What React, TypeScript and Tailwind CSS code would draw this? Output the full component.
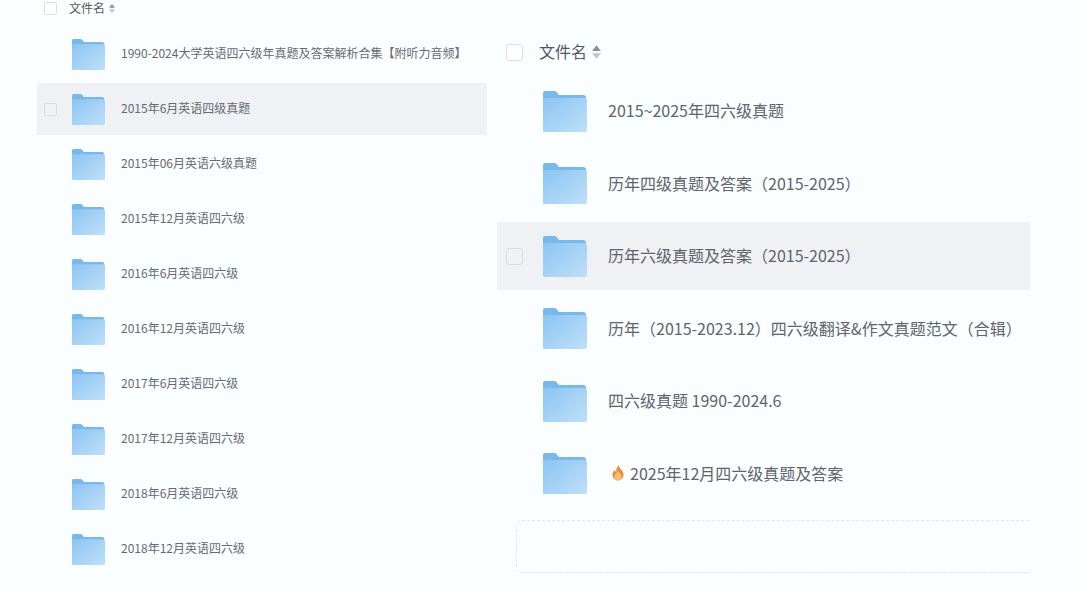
const leftRows = [
  "1990-2024大学英语四六级年真题及答案解析合集【附听力音频】",
  "2015年6月英语四级真题",
  "2015年06月英语六级真题",
  "2015年12月英语四六级",
  "2016年6月英语四六级",
  "2016年12月英语四六级",
  "2017年6月英语四六级",
  "2017年12月英语四六级",
  "2018年6月英语四六级",
  "2018年12月英语四六级",
];

const rightRows = [
  "2015~2025年四六级真题",
  "历年四级真题及答案（2015-2025）",
  "历年六级真题及答案（2015-2025）",
  "历年（2015-2023.12）四六级翻译&作文真题范文（合辑）",
  "四六级真题 1990-2024.6",
  "2025年12月四六级真题及答案",
];

function FolderIcon({ className, id }: { className: string; id: string }) {
  return (
    <svg className={className} viewBox="0 0 44 41" preserveAspectRatio="none">
      <defs>
        <linearGradient id={id} x1="0" y1="0" x2="1" y2="1">
          <stop offset="0" stopColor="#8cc5f2" />
          <stop offset="1" stopColor="#bfdff8" />
        </linearGradient>
      </defs>
      <path d="M0 2a2 2 0 0 1 2-2h9c2 0 3 1 4 3l1 1h24a3 3 0 0 1 3 3v6H0z" fill="#78b9ec" />
      <path d="M0 7h41a3 3 0 0 1 3 3v29a2 2 0 0 1-2 2H1a1 1 0 0 1-1-1z" fill={`url(#${id})`} />
    </svg>
  );
}

function SortIcon({ className }: { className: string }) {
  return (
    <svg className={className} viewBox="0 0 8 12">
      <path d="M4 0l4 5H0z" fill="#8b8f96" />
      <path d="M4 12L0 7h8z" fill="#c0c3c8" />
    </svg>
  );
}

function FlameIcon() {
  return (
    <svg className="w-[12px] h-[16px] ml-[4px] mr-[6px] shrink-0" viewBox="0 0 13 17">
      <path d="M7 0c.5 3 5.500 5.500 5.500 10.500A6 6 0 0 1 .5 10.500C.5 8 2 6.500 3 5c.3 1.300.8 2 1.500 2.300C4.500 4.500 5.500 2 7 0z" fill="#ee8a3c" />
      <path d="M6.500 6c.5 1.500 4 3.500 4 6.500a4 4 0 0 1-8 0c0-3 3.500-4.500 4-6.500z" fill="#f8bd72" />
    </svg>
  );
}

export default function App() {
  return (
    <div
      className="flex w-[1080px] h-[593px] overflow-hidden bg-[#fbfeff] text-[#60646c]"
      style={{ fontFamily: '"Noto Sans CJK SC", "Noto Sans", sans-serif' }}
    >
      {/* Left list */}
      <div className="w-[497px] shrink-0 pl-[37px] pr-[10px]">
        <div className="flex items-center h-[16px] pl-[7px]">
          <span className="w-[13px] h-[13px] rounded-[2px] border border-[#dcdfe3] bg-white" />
          <span className="ml-[12px] text-[12px] text-[#55585f]">文件名</span>
          <SortIcon className="ml-[4px] w-[6px] h-[9px]" />
        </div>
        <div className="mt-[10.500px]">
          {leftRows.map((label, i) => (
            <div key={label} className="flex items-center h-[55px]">
              <div className={`flex items-center w-full h-[52px] ${i === 1 ? "bg-[#eff1f4]" : ""}`}>
                <span className={`ml-[7px] w-[13px] h-[13px] rounded-[2px] border border-[#d8dbe0] ${i === 1 ? "" : "invisible"}`} />
                <FolderIcon id={`l${i}`} className="ml-[15px] w-[33px] h-[31px]" />
                <span className="ml-[16px] pb-[2px] text-[12px] whitespace-nowrap text-[#666a72]">{label}</span>
              </div>
            </div>
          ))}
        </div>
      </div>

      {/* Right list */}
      <div className="w-[533px] shrink-0">
        <div className="flex items-center h-[24px] mt-[40px] pl-[9px]">
          <span className="w-[17px] h-[17px] rounded-[3px] border border-[#dcdfe3] bg-white" />
          <span className="ml-[16px] pb-[2px] text-[16px] text-[#55585f]">文件名</span>
          <SortIcon className="ml-[5px] w-[9px] h-[14px]" />
        </div>
        <div className="mt-[11px]">
          {rightRows.map((label, i) => (
            <div key={label} className="flex items-center h-[72.500px]">
              <div className={`flex items-center w-full h-[68px] ${i === 2 ? "bg-[#eff1f4]" : ""}`}>
                <span className={`ml-[9px] w-[17px] h-[17px] rounded-[3px] border border-[#d8dbe0] ${i === 2 ? "" : "invisible"}`} />
                <FolderIcon id={`r${i}`} className="ml-[20px] w-[44px] h-[41px]" />
                <span className="ml-[21px] pb-[2px] flex items-center text-[16px] whitespace-nowrap text-[#60646c]">
                  {i === 5 && <FlameIcon />}
                  {label}
                </span>
              </div>
            </div>
          ))}
        </div>
        <div className="ml-[19px] mt-[10px] h-[53px] rounded-l-[6px] border border-r-0 border-dashed border-[#e3e6ea]" />
      </div>
    </div>
  );
}
